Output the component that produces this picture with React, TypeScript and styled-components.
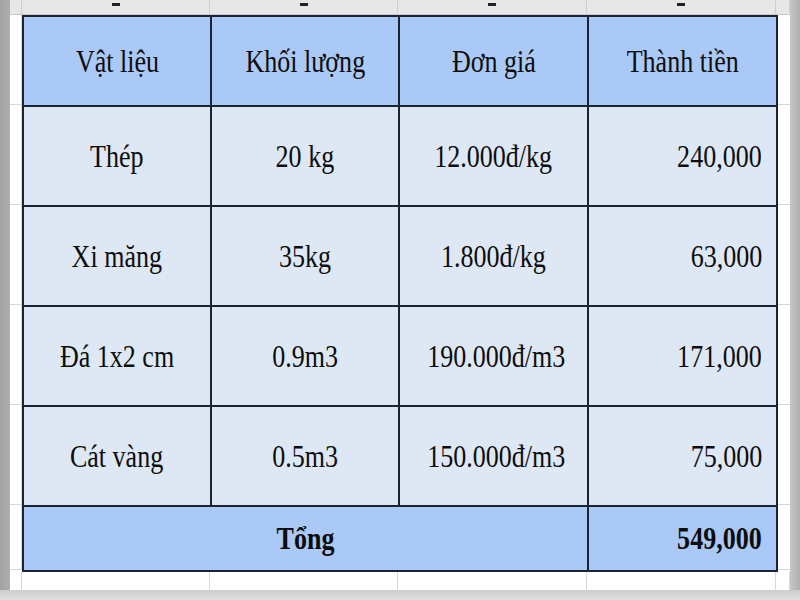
import styled, { createGlobalStyle } from 'styled-components';

const GlobalStyle = createGlobalStyle`
  html, body {
    margin: 0;
    padding: 0;
    background: #a9a9a9;
  }
  * {
    box-sizing: border-box;
  }
`;

const COLS = [188, 188, 189, 189];
const BORDER = '#1b2431';
const GRID = '#d9d9d9';

const Page = styled.div`
  width: 800px;
  height: 600px;
  display: flex;
  flex-direction: column;
  overflow: hidden;
  font-family: 'Liberation Serif', 'Times New Roman', serif;
`;

const Main = styled.div`
  flex: 1;
  display: flex;
  min-height: 0;
`;

const SideBar = styled.div<{ $right?: boolean }>`
  width: 10px;
  flex-shrink: 0;
  background: ${(p) =>
    p.$right
      ? 'linear-gradient(90deg, #c6c6c6, #b0b0b0)'
      : 'linear-gradient(90deg, #a2a2a2, #afafaf)'};
`;

const BottomBar = styled.div`
  height: 10px;
  flex-shrink: 0;
  background: linear-gradient(180deg, #cdcdcd, #e0e0e0);
`;

const Sheet = styled.div`
  flex: 1;
  min-width: 0;
  overflow: hidden;
  display: flex;
  flex-direction: column;
  background: #fff;
`;

const ColumnStrip = styled.div`
  height: 15px;
  flex-shrink: 0;
  display: flex;
  background: #e7e7e7;
  border-bottom: 1px solid #c9c9c9;
`;

const ColumnHead = styled.div<{ $w: number }>`
  width: ${(p) => p.$w}px;
  flex-shrink: 0;
  border-right: 1px solid #cfcfcf;
  display: flex;
  justify-content: center;
  padding-top: 3px;
`;

const Mark = styled.span`
  width: 8px;
  height: 3px;
  background: #222;
`;

const Body = styled.div`
  display: flex;
  flex-shrink: 0;
`;

const RowHeads = styled.div`
  width: 12px;
  flex-shrink: 0;
  display: flex;
  flex-direction: column;
`;

const RowHead = styled.div<{ $h: number }>`
  height: ${(p) => p.$h}px;
  border-bottom: 1px solid ${GRID};
  border-right: 1px solid ${GRID};
`;

const Filler = styled.div`
  width: 14px;
  flex-shrink: 0;
  display: flex;
  flex-direction: column;
`;

const FillerCell = styled.div<{ $h: number }>`
  height: ${(p) => p.$h}px;
  border-bottom: 1px solid ${GRID};
`;

const Table = styled.table`
  border-collapse: collapse;
  table-layout: fixed;
  width: 754px;
  flex-shrink: 0;
  color: #0d0d0d;
`;

const Cell = styled.td<{ $bg: string; $h: number; $align?: string }>`
  height: ${(p) => p.$h}px;
  padding: 0 14px;
  background: ${(p) => p.$bg};
  border: 2px solid ${BORDER};
  text-align: ${(p) => p.$align || 'center'};
  vertical-align: middle;
  font-size: 31px;
  line-height: 1;
  white-space: nowrap;
`;

const Text = styled.span<{ $right?: boolean; $bold?: boolean }>`
  display: inline-block;
  transform: scaleX(0.84);
  transform-origin: ${(p) => (p.$right ? 'right center' : 'center')};
  font-weight: ${(p) => (p.$bold ? 700 : 400)};
`;

const TrailRow = styled.div`
  height: 20px;
  flex-shrink: 0;
  display: flex;
`;

const TrailCell = styled.div<{ $w: number }>`
  width: ${(p) => p.$w}px;
  flex-shrink: 0;
  border-right: 1px solid ${GRID};
  border-bottom: 1px solid ${GRID};
`;

const HEAD_BG = '#abc9f6';
const ROW_BG = '#dde8f4';

const headers = ['Vật liệu', 'Khối lượng', 'Đơn giá', 'Thành tiền'];

const rows = [
  ['Thép', '20 kg', '12.000đ/kg', '240,000'],
  ['Xi măng', '35kg', '1.800đ/kg', '63,000'],
  ['Đá 1x2 cm', '0.9m3', '190.000đ/m3', '171,000'],
  ['Cát vàng', '0.5m3', '150.000đ/m3', '75,000'],
];

const heights = [90, 100, 100, 100, 100, 65];

export default function App() {
  return (
    <Page>
      <GlobalStyle />
      <Main>
        <SideBar />
        <Sheet>
          <ColumnStrip>
            <ColumnHead $w={12} />
            {COLS.map((w, i) => (
              <ColumnHead key={i} $w={w}>
                <Mark />
              </ColumnHead>
            ))}
            <ColumnHead $w={14} />
          </ColumnStrip>
          <Body>
            <RowHeads>
              {heights.map((h, i) => (
                <RowHead key={i} $h={h} />
              ))}
            </RowHeads>
            <Table>
              <colgroup>
                {COLS.map((w, i) => (
                  <col key={i} style={{ width: w }} />
                ))}
              </colgroup>
              <tbody>
                <tr>
                  {headers.map((h) => (
                    <Cell key={h} $bg={HEAD_BG} $h={90}>
                      <Text>{h}</Text>
                    </Cell>
                  ))}
                </tr>
                {rows.map((r) => (
                  <tr key={r[0]}>
                    <Cell $bg={ROW_BG} $h={100}>
                      <Text>{r[0]}</Text>
                    </Cell>
                    <Cell $bg={ROW_BG} $h={100}>
                      <Text>{r[1]}</Text>
                    </Cell>
                    <Cell $bg={ROW_BG} $h={100}>
                      <Text>{r[2]}</Text>
                    </Cell>
                    <Cell $bg={ROW_BG} $h={100} $align="right">
                      <Text $right>{r[3]}</Text>
                    </Cell>
                  </tr>
                ))}
                <tr>
                  <Cell $bg={HEAD_BG} $h={65} colSpan={3}>
                    <Text $bold>Tổng</Text>
                  </Cell>
                  <Cell $bg={HEAD_BG} $h={65} $align="right">
                    <Text $right $bold>
                      549,000
                    </Text>
                  </Cell>
                </tr>
              </tbody>
            </Table>
            <Filler>
              {heights.map((h, i) => (
                <FillerCell key={i} $h={h} />
              ))}
            </Filler>
          </Body>
          <TrailRow>
            <TrailCell $w={12} />
            {COLS.map((w, i) => (
              <TrailCell key={i} $w={w} />
            ))}
            <TrailCell $w={14} />
          </TrailRow>
        </Sheet>
        <SideBar $right />
      </Main>
      <BottomBar />
    </Page>
  );
}
